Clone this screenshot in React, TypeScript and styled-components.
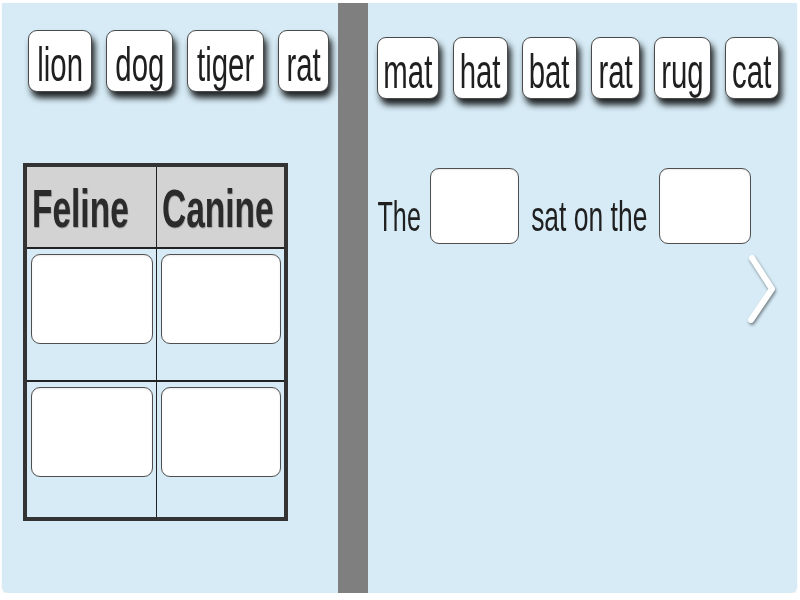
import React from 'react';
import styled, { createGlobalStyle } from 'styled-components';

const GlobalStyle = createGlobalStyle`
  html, body {
    margin: 0;
    padding: 0;
    background: #ffffff;
  }
  body {
    font-family: 'Liberation Sans', Arial, sans-serif;
    color: #222;
  }
`;

// the reference text is drawn narrow: squeeze glyphs horizontally
const SQUEEZE = 0.6;

const Board = styled.div`
  display: flex;
  margin: 3px 3px 0 2px;
  height: 590px;
  border-radius: 0 0 6px 6px;
  overflow: hidden;
  box-shadow: 0 1px 2px rgba(0, 0, 0, 0.08);
`;

const Panel = styled.div<{ $w: number; $pad: string }>`
  width: ${p => p.$w}px;
  flex: none;
  box-sizing: border-box;
  padding: ${p => p.$pad};
  background: #d6ebf6;
  display: flex;
  flex-direction: column;
`;

const Splitter = styled.div`
  width: 30px;
  flex: none;
  background: #7f7f7f;
`;

const TileRow = styled.div`
  display: flex;
  gap: 14px;
`;

const Tile = styled.div<{ $w: number }>`
  width: ${p => p.$w}px;
  height: 62px;
  box-sizing: border-box;
  flex: none;
  display: flex;
  align-items: center;
  justify-content: center;
  padding-top: 6px;
  background: #ffffff;
  border: 1px solid #4a4a4a;
  border-radius: 9px;
  box-shadow: 3px 6px 6px rgba(0, 0, 0, 0.85);
  font-size: 49px;
  line-height: 1;
  color: #1f1f1f;
  white-space: nowrap;
  cursor: grab;
`;

const Ink = styled.span<{ $origin?: string; $sx?: number }>`
  display: inline-block;
  white-space: nowrap;
  transform: scaleX(${p => p.$sx ?? SQUEEZE});
  transform-origin: ${p => p.$origin ?? 'center'} center;
`;

const Grid = styled.div`
  margin: 71px 0 0 -5px;
  display: grid;
  grid-template-columns: 129px 127px;
  grid-template-rows: 80px 131px 135px;
  column-gap: 1px;
  row-gap: 2px;
  width: max-content;
  background: #222;
  border: 4px solid #333;
`;

const HeadCell = styled.div`
  background: #d3d3d3;
  display: flex;
  align-items: center;
  padding: 2px 0 0 5px;
  font-size: 54px;
  font-weight: bold;
  line-height: 1;
  color: #2b2b2b;
  text-shadow: 1px 1px 1px rgba(0, 0, 0, 0.25);
  overflow: visible;
`;

const BodyCell = styled.div`
  background: #d6ebf6;
  padding: 5px 3px 0 4px;
`;

const Slot = styled.div<{ $w?: number; $h: number }>`
  width: ${p => (p.$w ? `${p.$w}px` : '100%')};
  height: ${p => p.$h}px;
  box-sizing: border-box;
  flex: none;
  background: #ffffff;
  border: 1px solid #4f4f4f;
  border-radius: 9px;
  box-shadow: inset 0 1px 2px rgba(0, 0, 0, 0.08);
`;

const Sentence = styled.div`
  margin-top: 69px;
  display: flex;
  align-items: flex-end;
  gap: 9px;
`;

const Words = styled.span<{ $w: number }>`
  width: ${p => p.$w}px;
  flex: none;
  display: flex;
  justify-content: center;
  margin-bottom: 6px;
  font-size: 42px;
  line-height: 1;
  color: #1f1f1f;
`;

const NavRow = styled.div`
  display: flex;
  justify-content: flex-end;
  padding-right: 18px;
  margin-top: 8px;
`;

const NextButton = styled.svg`
  width: 36px;
  height: 76px;
  cursor: pointer;
  filter: drop-shadow(1px 2px 1.5px rgba(0, 0, 0, 0.45));
`;

const animals = [
  { word: 'lion', w: 64 },
  { word: 'dog', w: 67 },
  { word: 'tiger', w: 77 },
  { word: 'rat', w: 51 },
];

const rhymes = [
  { word: 'mat', w: 62 },
  { word: 'hat', w: 55 },
  { word: 'bat', w: 55 },
  { word: 'rat', w: 49 },
  { word: 'rug', w: 57 },
  { word: 'cat', w: 54 },
];

const Next = () => (
  <NextButton viewBox="0 0 36 76">
    <polyline
      points="9,6 29,37 8,68"
      fill="none"
      stroke="#ffffff"
      strokeWidth="6"
      strokeLinecap="round"
      strokeLinejoin="round"
    />
  </NextButton>
);

export default function App() {
  return (
    <>
      <GlobalStyle />
      <Board>
        <Panel $w={336} $pad="27px 0 0 26px">
          <TileRow>
            {animals.map(a => (
              <Tile key={a.word} $w={a.w}>
                <Ink>{a.word}</Ink>
              </Tile>
            ))}
          </TileRow>

          <Grid>
            <HeadCell>
              <Ink $origin="left" $sx={0.62}>Feline</Ink>
            </HeadCell>
            <HeadCell>
              <Ink $origin="left" $sx={0.62}>Canine</Ink>
            </HeadCell>
            {[0, 1, 2, 3].map(i => (
              <BodyCell key={i}>
                <Slot $h={90} />
              </BodyCell>
            ))}
          </Grid>
        </Panel>

        <Splitter />

        <Panel $w={429} $pad="34px 0 0 9px">
          <TileRow>
            {rhymes.map(r => (
              <Tile key={r.word} $w={r.w}>
                <Ink>{r.word}</Ink>
              </Tile>
            ))}
          </TileRow>

          <Sentence>
            <Words $w={44}>
              <Ink>The</Ink>
            </Words>
            <Slot $w={89} $h={76} />
            <Words $w={122}>
              <Ink $sx={0.63}>sat on the</Ink>
            </Words>
            <Slot $w={92} $h={76} />
          </Sentence>

          <NavRow>
            <Next />
          </NavRow>
        </Panel>
      </Board>
    </>
  );
}
